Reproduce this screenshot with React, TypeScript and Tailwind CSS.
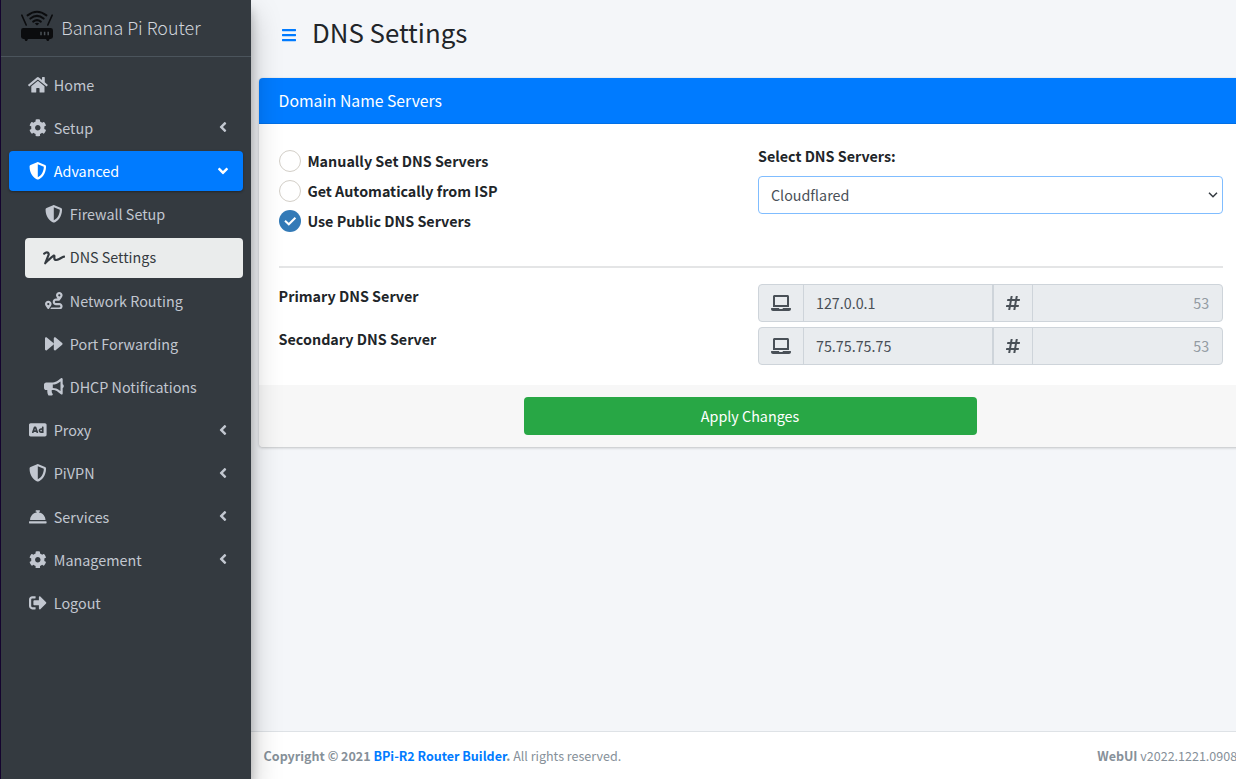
import React from "react";
import {
  FaHome, FaCog, FaShieldAlt, FaSignature, FaRoute, FaForward, FaBullhorn, FaAd,
  FaConciergeBell, FaSignOutAlt, FaAngleLeft, FaAngleDown, FaLaptop, FaHashtag, FaBars,
} from "react-icons/fa";
import type { IconType } from "react-icons";

type Item = { label: string; icon: IconType; size?: string; kind?: "group" | "open" | "sub" | "current" };

const square = "w-[17.6px]";
const wide = "w-[19.8px]";
const widest = "w-[22px]";

const items: Item[] = [
  { label: "Home", icon: FaHome, size: wide },
  { label: "Setup", icon: FaCog, kind: "group" },
  { label: "Advanced", icon: FaShieldAlt, kind: "open" },
  { label: "Firewall Setup", icon: FaShieldAlt, kind: "sub" },
  { label: "DNS Settings", icon: FaSignature, size: widest, kind: "current" },
  { label: "Network Routing", icon: FaRoute, kind: "sub" },
  { label: "Port Forwarding", icon: FaForward, kind: "sub" },
  { label: "DHCP Notifications", icon: FaBullhorn, size: wide, kind: "sub" },
  { label: "Proxy", icon: FaAd, kind: "group" },
  { label: "PiVPN", icon: FaShieldAlt, kind: "group" },
  { label: "Services", icon: FaConciergeBell, kind: "group" },
  { label: "Management", icon: FaCog, kind: "group" },
  { label: "Logout", icon: FaSignOutAlt },
];

function RouterLogo() {
  return (
    <svg viewBox="0 0 34 32" className="h-[32px] w-[34px] shrink-0" fill="none" stroke="#0b0c0e" strokeLinecap="round">
      <rect x="1" y="18" width="32" height="11" rx="2.4" fill="#0b0c0e" stroke="none" />
      <path d="M4.2 28.5h4l-1.2 2.6h-1.6zM25.8 28.5h4l-1.2 2.6h-1.6z" fill="#0b0c0e" stroke="none" />
      <path d="M1.8 5.2 6.2 15M32.2 5.2 27.8 15" strokeWidth="1.6" />
      <path d="M7.6 5.4Q17-2 26.4 5.4M10.4 8.6Q17 3.2 23.6 8.6M13.2 11.6Q17 8.6 20.8 11.6" strokeWidth="2" />
      <path d="M14.8 13.6Q17 12 19.2 13.6L17 15.4z" fill="#0b0c0e" stroke="none" />
      <path d="M21 21.8v3.4M24.6 21.8v3.4M28.2 21.8v3.4" stroke="#4a5056" strokeWidth="1.5" strokeLinecap="butt" />
    </svg>
  );
}

function NavRow({ label, icon: Icon, size = square, kind }: Item) {
  const tone =
    kind === "open"
      ? "bg-[#007bff] text-white shadow-[0_1px_3px_rgba(0,0,0,0.12),0_1px_2px_rgba(0,0,0,0.24)]"
      : kind === "current"
        ? "ml-4 bg-[#eaecec] text-[#343a40]"
        : kind === "sub"
          ? "ml-4 text-[#c2c7d0]"
          : "text-[#c2c7d0]";
  return (
    <a className={`mb-[3.2px] flex h-10 items-center rounded pl-4 pr-[15px] ${tone}`}>
      <span className="-mt-[0.8px] mr-[3.2px] flex w-[25.6px] shrink-0 justify-center">
        <Icon className={`h-[17.6px] shrink-0 ${size}`} />
      </span>
      <span className="-mt-[0.65px] grow whitespace-nowrap text-[14.35px] leading-6">{label}</span>
      {kind === "group" && <FaAngleLeft className="-ml-1 mb-[1.6px] mr-[0.5px] h-4 w-[10px]" />}
      {kind === "open" && <FaAngleDown className="mb-px h-4 w-[10px]" />}
    </a>
  );
}

function Radio({ label, checked }: { label: string; checked?: boolean }) {
  return (
    <label className="flex h-[30px] items-center">
      <span
        className={
          checked
            ? "flex size-[22px] items-center justify-center rounded-full bg-[#337ab7]"
            : "size-[22px] rounded-full border border-[#d3cfc8] bg-white"
        }
      >
        {checked && (
          <svg viewBox="0 0 22 22" className="size-[22px]" fill="none" stroke="#fff" strokeWidth="2">
            <path d="m6 10.8 3.8 3.5 6.6-6.5" />
          </svg>
        )}
      </span>
      <span className="ml-[6.8px] text-[14.33px] font-bold leading-6">{label}</span>
    </label>
  );
}

function ServerRow({ label, ip }: { label: string; ip: string }) {
  return (
    <div className="mb-[5px] flex h-[38px]">
      <div className="w-[479.4px] shrink-0 text-[14.33px] font-bold leading-6">{label}</div>
      <div className="flex w-[465px] overflow-hidden rounded border border-[#ced4da] bg-[#e9ecef] text-[#495057]">
        <span className="flex w-[45px] items-center justify-center border-r border-[#ced4da]">
          <FaLaptop className="h-4 w-5" />
        </span>
        <span className="flex w-[190px] items-center border-r-2 border-[#ced4da] pl-3 text-[14.3px]">{ip}</span>
        <span className="flex w-[39px] items-center justify-center border-r border-[#ced4da]">
          <FaHashtag className="size-4" />
        </span>
        <span className="flex grow items-center justify-end pr-[12.8px] text-[14.3px] text-[#939ba2]">53</span>
      </div>
    </div>
  );
}

export default function App() {
  return (
    <div className="flex h-[779px] w-[1236px] overflow-hidden bg-[#f4f6f9] font-['Noto_Sans_CJK_SC','Open_Sans',sans-serif] text-[#212529]">
      <aside className="z-10 h-full w-[251px] shrink-0 border-l border-[#14042e] bg-[#343a40] shadow-[0_14px_28px_rgba(0,0,0,0.25),0_10px_10px_rgba(0,0,0,0.22)]">
        <div className="flex h-[57px] items-start border-b border-[#4b545c] pl-[19px] pt-[10px]">
          <RouterLogo />
          <span className="ml-[7.2px] mt-[2px] whitespace-nowrap text-[17.9px] font-light leading-[30px] text-[#d0d4db]">Banana Pi Router</span>
        </div>
        <nav className="mt-2 px-2">
          {items.map((it) => (
            <NavRow key={it.label} {...it} />
          ))}
        </nav>
      </aside>

      <div className="flex min-w-0 grow flex-col">
        <header className="flex h-[78px] items-start pl-[30px] pt-[14px]">
          <FaBars className="mt-[13px] size-4 text-[#007bff]" />
          <h1 className="ml-[15px] text-[25.8px] leading-[35px]">DNS Settings</h1>
        </header>
        <main className="grow pl-2">
          <section className="w-[984px] rounded shadow-[0_0_1px_rgba(0,0,0,0.125),0_1px_3px_rgba(0,0,0,0.2)]">
            <h3 className="h-[46px] rounded-t border-b border-[#006fe6] bg-[#007bff] pl-[19.6px] text-[15.75px] leading-[45px] text-white">
              Domain Name Servers
            </h3>
            <div className="h-[261px] bg-white pl-[19.6px]">
              <div className="flex h-[142px] pt-[20px]">
                <div className="w-[479.4px] shrink-0 pt-[2px]">
                  <Radio label="Manually Set DNS Servers" />
                  <Radio label="Get Automatically from ISP" />
                  <Radio label="Use Public DNS Servers" checked />
                </div>
                <div className="w-[465px]">
                  <div className="mb-2 text-[14.3px] font-bold leading-6">Select DNS Servers:</div>
                  <div className="flex h-[38px] items-center justify-between rounded border border-[#80bdff] bg-white pl-3 pr-1 text-[14.3px] text-[#495057]">
                    Cloudflared
                    <svg viewBox="0 0 10 6" className="h-[6px] w-[10px]" fill="none" stroke="#343a40" strokeWidth="1.5">
                      <path d="m1 .8 4 4 4-4" />
                    </svg>
                  </div>
                </div>
              </div>
              <div className="mb-[16px] h-[2px] w-[944.4px] bg-[#e4e5e6]" />
              <ServerRow label="Primary DNS Server" ip="127.0.0.1" />
              <ServerRow label="Secondary DNS Server" ip="75.75.75.75" />
            </div>
            <div className="flex h-[62px] justify-center rounded-b bg-[#f7f7f7] pr-[2px] pt-3">
              <button className="h-[38px] w-[453px] rounded bg-[#28a745] text-[14.33px] text-white">Apply Changes</button>
            </div>
          </section>
        </main>
        <footer className="flex h-[48px] items-center justify-between whitespace-nowrap border-t border-[#dee2e6] bg-white pl-[12.6px] pt-[2px] text-[12.52px] text-[#869099]">
          <span>
            <b>Copyright © 2021 <span className="text-[#007bff]">BPi-R2 Router Builder</span>.</b> All rights reserved.
          </span>
          <span className="w-[138.8px]">
            <b>WebUI</b> v2022.1221.0908
          </span>
        </footer>
      </div>
    </div>
  );
}
